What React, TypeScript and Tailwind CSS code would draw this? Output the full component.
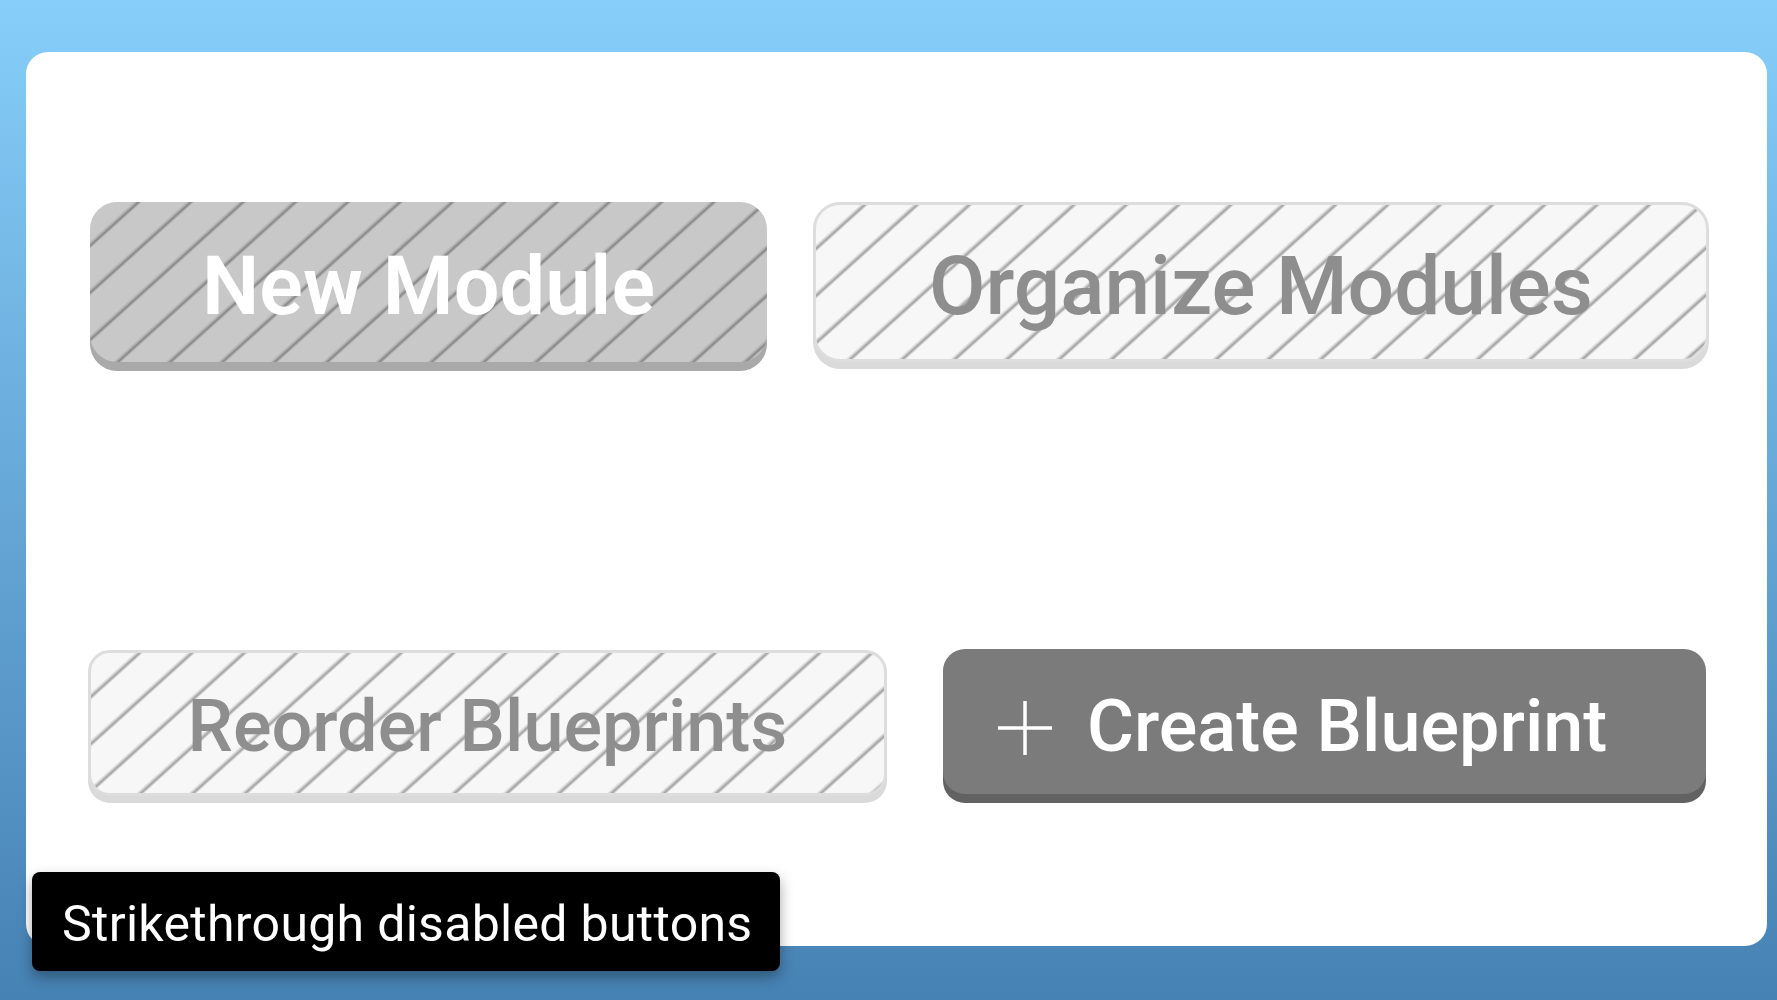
import React from "react";

function Plus() {
  return (
    <svg width="54" height="54" viewBox="0 0 54 54" fill="none" className="mt-[12px]">
      <line x1="27" y1="0" x2="27" y2="54" stroke="#ffffff" strokeWidth="3.5" />
      <line x1="0" y1="27" x2="54" y2="27" stroke="#ffffff" strokeWidth="3.5" />
    </svg>
  );
}

export default function App() {
  return (
    <div
      className="relative w-[1777px] h-[1000px] overflow-hidden bg-gradient-to-b from-[#87cefa] to-[#4682b4] pt-[52px] pl-[26px]"
      style={{ fontFamily: "Roboto, 'Noto Sans', sans-serif" }}
    >
      <div className="w-[1741px] h-[894px] rounded-[22px] bg-white pt-[150px] pl-[64px] flex flex-col">
        <div className="flex items-start gap-[46px]">
          <div className="w-[677px] h-[160px] rounded-[27px] shadow-[0_9px_0_#a9a9a9] bg-[#c8c8c8] bg-[image:repeating-linear-gradient(138deg,#c8c8c8_0px,#c8c8c8_29px,#acacac_31px,#858585_32.5px,#acacac_34px,#c8c8c8_35px)] flex items-center justify-center">
            <span className="text-white text-[81px] font-semibold leading-none pt-[8px]">New Module</span>
          </div>
          <div className="w-[896px] h-[160px] rounded-[27px] border-[3px] border-[#dddddd] shadow-[0_7px_0_#dadada] bg-[#f7f7f7] bg-[image:repeating-linear-gradient(138deg,#f7f7f7_0px,#f7f7f7_29px,#cecece_31px,#a0a0a0_32.5px,#cecece_34px,#f7f7f7_35px)] flex items-center justify-center">
            <span className="text-[#8e8e8e] text-[82px] font-medium leading-none pt-[8px]">Organize Modules</span>
          </div>
        </div>
        <div className="flex items-start gap-[56px] mt-[288px] ml-[-2px]">
          <div className="w-[799px] h-[146px] rounded-[22px] border-[3px] border-[#dddddd] shadow-[0_7px_0_#dadada] bg-[#f7f7f7] bg-[image:repeating-linear-gradient(138deg,#f7f7f7_0px,#f7f7f7_29px,#cecece_31px,#a0a0a0_32.5px,#cecece_34px,#f7f7f7_35px)] flex items-center justify-center">
            <span className="text-[#8e8e8e] text-[72px] font-medium leading-none pt-[8px]">Reorder Blueprints</span>
          </div>
          <div className="w-[763px] h-[145px] -mt-[1px] rounded-[22px] shadow-[0_9px_0_#626262] bg-[#7b7b7b] flex items-center pl-[55px] gap-[35px]">
            <Plus />
            <span className="text-white text-[72px] font-medium leading-none pt-[10px]">Create Blueprint</span>
          </div>
        </div>
      </div>
      <div className="absolute left-[32px] top-[872px] w-[748px] h-[99px] rounded-[8px] bg-black shadow-[0_6px_14px_rgba(0,0,0,0.35)] flex items-center pl-[30px]">
        <span className="text-white text-[50px] tracking-[0.3px] leading-none pt-[4px]">Strikethrough disabled buttons</span>
      </div>
    </div>
  );
}
